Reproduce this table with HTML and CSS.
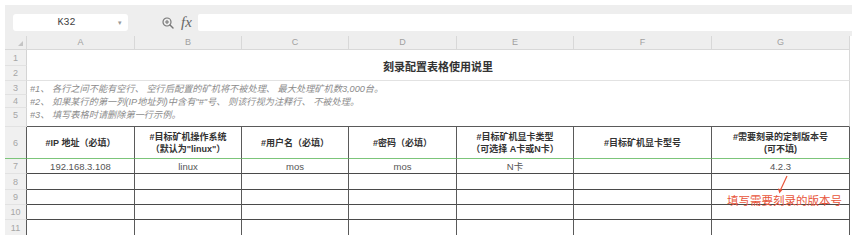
FILE: index.html
```html
<!DOCTYPE html>
<html lang="zh-CN">
<head>
<meta charset="utf-8">
<title>刻录配置表格使用说里</title>
<link rel="stylesheet" href="styles.css">
</head>
<body>
<div class="app">
  <div class="toolbar">
    <div class="namebox"><span class="ref">K32</span><span class="caret">▾</span></div>
    <svg class="zoomicon" width="12" height="12" viewBox="0 0 12 12">
      <circle cx="5" cy="5" r="4" fill="none" stroke="#777" stroke-width="1.2"/>
      <path d="M3 5h4M5 3v4" stroke="#777" stroke-width="1.1"/>
      <path d="M8 8l3 3" stroke="#777" stroke-width="1.4" stroke-linecap="round"/>
    </svg>
    <span class="fx">fx</span>
    <div class="formula"></div>
  </div>
  <div class="sheet">
    <div class="corner"><span class="tri"></span></div>
    <div class="ch">A</div><div class="ch">B</div><div class="ch">C</div><div class="ch">D</div><div class="ch">E</div><div class="ch">F</div><div class="ch">G</div>

    <div class="rh">1</div>
    <div class="title">刻录配置表格使用说里</div>
    <div class="rh">2</div>
    <div class="rh">3</div>
    <div class="notes">
      <div>#1、 各行之间不能有空行、 空行后配置的矿机将不被处理、 最大处理矿机数3,000台。</div>
      <div>#2、 如果某行的第一列(IP地址列)中含有"#"号、 则该行视为注释行、 不被处理。</div>
      <div>#3、 填写表格时请删除第一行示例。</div>
    </div>
    <div class="rh">4</div>
    <div class="rh rh5">5</div>

    <div class="rh rt rhead">6</div>
    <div class="c th">#IP 地址（必填）</div>
    <div class="c th">#目标矿机操作系统<br>（默认为"linux"）</div>
    <div class="c th">#用户名（必填）</div>
    <div class="c th">#密码（必填）</div>
    <div class="c th">#目标矿机显卡类型<br>（可选择 A卡或N卡）</div>
    <div class="c th">#目标矿机显卡型号</div>
    <div class="c th">#需要刻录的定制版本号<br>(可不填)</div>

    <div class="rh rt">7</div>
    <div class="c td">192.168.3.108</div>
    <div class="c td">linux</div>
    <div class="c td">mos</div>
    <div class="c td">mos</div>
    <div class="c td">N卡</div>
    <div class="c td"></div>
    <div class="c td">4.2.3</div>

    <div class="rh rt">8</div>
    <div class="c"></div><div class="c"></div><div class="c"></div><div class="c"></div><div class="c"></div><div class="c"></div><div class="c"></div>
    <div class="rh rt">9</div>
    <div class="c"></div><div class="c"></div><div class="c"></div><div class="c"></div><div class="c"></div><div class="c"></div><div class="c"></div>
    <div class="rh rt">10</div>
    <div class="c"></div><div class="c"></div><div class="c"></div><div class="c"></div><div class="c"></div><div class="c"></div><div class="c"></div>
    <div class="rh rt last">11</div>
    <div class="c last"></div><div class="c last"></div><div class="c last"></div><div class="c last"></div><div class="c last"></div><div class="c last"></div><div class="c last"></div>

    <svg class="arrow" width="20" height="22" viewBox="0 0 20 22">
      <path d="M17 2L10 17" stroke="#e8553a" stroke-width="1.2" fill="none"/>
      <path d="M8 14.5L9.3 19.5L12.6 15.8Z" fill="#e8553a"/>
    </svg>
    <div class="note-red">填写需要刻录的版本号</div>
  </div>
</div>
</body>
</html>
```

FILE: styles.css
```css
* { box-sizing: border-box; }
html, body { margin: 0; padding: 0; background: #fff; }
body {
  font-family: "Liberation Sans", "Noto Sans CJK SC", sans-serif;
  color: #333;
}
.app {
  width: 847px;
  margin: 5px 0 0 5px;
}
.toolbar {
  height: 31px;
  background: #eeeeee;
  display: flex;
  align-items: flex-start;
  padding-top: 9px;
}
.namebox {
  margin-left: 8px;
  width: 115px;
  height: 17px;
  background: #fff;
  border-radius: 3px;
  display: flex;
  align-items: center;
}
.namebox .ref {
  flex: 1;
  text-align: center;
  font-family: "Liberation Mono", "DejaVu Sans Mono", monospace;
  font-size: 10px;
  color: #444;
  padding-left: 2px;
}
.namebox .caret {
  width: 10px;
  font-size: 7px;
  color: #999;
}
.zoomicon { margin: 3px 0 0 34px; }
.fx {
  margin: 0 0 0 7px;
  font-family: "Liberation Serif", serif;
  font-style: italic;
  font-size: 15px;
  line-height: 17px;
  color: #666;
}
.formula {
  margin-left: 6px;
  flex: 1;
  height: 17px;
  background: #fff;
  border-radius: 2px 0 0 2px;
}
.sheet {
  position: relative;
  display: grid;
  grid-template-columns: 22px 108px 107px 107px 108px 117px 138px 138px;
  grid-template-rows: 14px 16px 15px 14px 13px 19px 32px 15px 16px 15px 15px 15px;
}
.corner {
  background: #eeeeee;
  border-bottom: 1px solid #d8d8d8;
  border-right: 1px solid #d8d8d8;
  position: relative;
}
.corner .tri {
  position: absolute;
  right: 3px;
  bottom: 3px;
  width: 0; height: 0;
  border-left: 5px solid transparent;
  border-bottom: 5px solid #c4c4c4;
}
.ch {
  background: #eeeeee;
  border-bottom: 1px solid #d8d8d8;
  border-right: 1px solid #d8d8d8;
  color: #a0a0a0;
  font-size: 9px;
  text-align: center;
  line-height: 13px;
}
.rh {
  background: #f0f0f0;
  border-right: 1px solid #d4d4d4;
  border-bottom: 1px solid #e2e2e2;
  color: #a6a6a6;
  font-size: 9px;
  text-align: center;
  display: flex;
  align-items: center;
  justify-content: center;
}
.rh5 { align-items: flex-start; padding-top: 2px; }
.rh.rt { border-right-color: #5a5a5a; }
.rh.rhead { border-bottom: 1px solid #7cc57a; }
.rh.last, .c.last { border-bottom: none; }
.title {
  grid-column: span 7;
  grid-row: span 2;
  border-bottom: 1px solid #e2e2e2;
  border-right: 1px solid #d8d8d8;
  display: flex;
  align-items: center;
  justify-content: center;
  font-family: "Noto Sans CJK SC", sans-serif;
  font-weight: bold;
  font-size: 11px;
  color: #333;
  padding-top: 1px;
}
.notes {
  grid-column: span 7;
  grid-row: span 3;
  border-bottom: 1px solid #5a5a5a;
  border-right: 1px solid #d8d8d8;
  padding: 2px 0 0 3px;
  font-size: 9.2px;
  line-height: 13px;
  font-style: italic;
  font-synthesis: style;
  color: #8c8c8c;
  white-space: nowrap;
}
.c {
  border-right: 1px solid #5a5a5a;
  border-bottom: 1px solid #4a4a4a;
  display: flex;
  align-items: center;
  justify-content: center;
  text-align: center;
  font-size: 9px;
}
.c.th {
  font-weight: bold;
  color: #333;
  line-height: 12px;
  border-bottom: 1px solid #7cc57a;
}
.c.td {
  color: #555;
  font-size: 9.5px;
}
.arrow {
  position: absolute;
  left: 765px;
  top: 138px;
}
.note-red {
  position: absolute;
  left: 722px;
  top: 157px;
  font-family: "Noto Sans CJK SC", sans-serif;
  font-size: 11.5px;
  line-height: 14px;
  color: #e8553a;
  white-space: nowrap;
}
```
